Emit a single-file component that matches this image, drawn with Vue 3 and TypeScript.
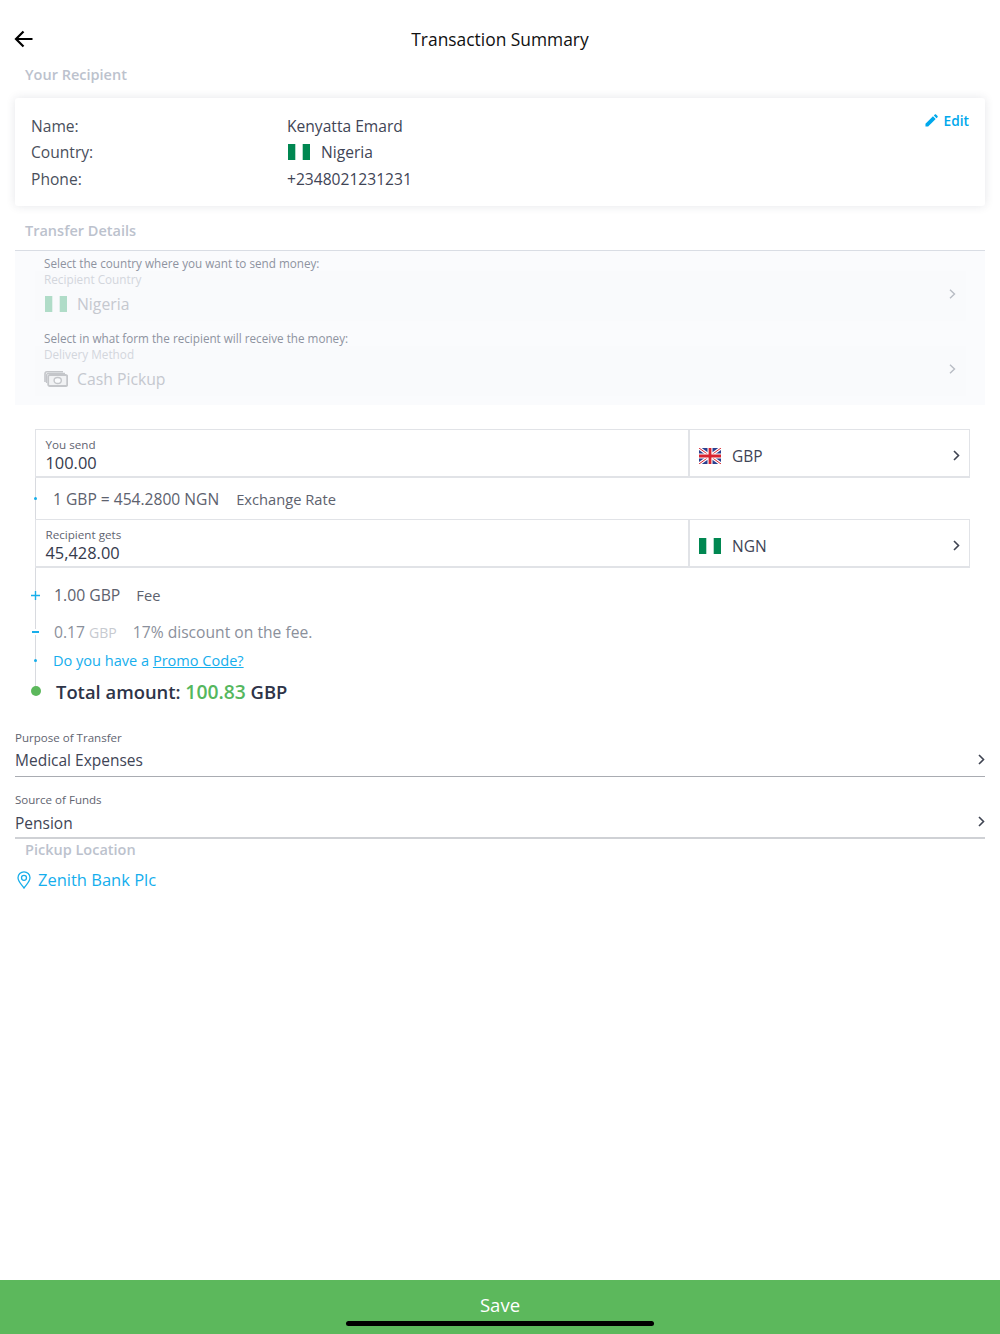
<script setup lang="ts">
const recipient = [
  { label: 'Name:', value: 'Kenyatta Emard', flag: false },
  { label: 'Country:', value: 'Nigeria', flag: true },
  { label: 'Phone:', value: '+2348021231231', flag: false },
]
const selects = [
  { label: 'Purpose of Transfer', value: 'Medical Expenses' },
  { label: 'Source of Funds', value: 'Pension' },
]
</script>

<template>
  <div class="page">
    <header class="header">
      <svg class="back" width="20" height="18" viewBox="0 0 20 18" fill="none" stroke="#000" stroke-width="2.2">
        <path d="M18.5 9H2M9.5 1.5 2 9l7.5 7.5" />
      </svg>
      <div class="title">Transaction Summary</div>
    </header>

    <div class="section-title recipient-title">Your Recipient</div>
    <section class="card">
      <div class="card-rows">
        <div v-for="r in recipient" :key="r.label" class="card-row">
          <span class="card-label">{{ r.label }}</span>
          <span class="card-value">
            <svg v-if="r.flag" class="flag flag-gap-small" width="22" height="16" viewBox="0 0 22 16"><rect width="7.3" height="16" fill="#008751" /><rect x="14.7" width="7.3" height="16" fill="#008751" /></svg>
            {{ r.value }}
          </span>
        </div>
      </div>
      <div class="edit">
        <svg width="13" height="13" viewBox="0 0 14 14" fill="#00a8ec"><path d="M0.5 13.5V10.6L8.6 2.5 11.5 5.4 3.4 13.5ZM9.5 1.6 10.6 0.5C11 .1 11.5 .1 11.9 .5L13.5 2.1C13.9 2.5 13.9 3 13.5 3.4L12.4 4.5Z" /></svg>
        <span>Edit</span>
      </div>
    </section>

    <div class="section-title details-title">Transfer Details</div>
    <section class="details">
      <div class="detail">
        <div class="detail-hint">Select the country where you want to send money:</div>
        <div class="detail-box">
          <div class="detail-label">Recipient Country</div>
          <div class="detail-value">
            <svg class="detail-icon" width="24" height="16" viewBox="0 0 24 16"><rect x="1" width="7.3" height="16" fill="#b0dcc8" /><rect x="15.7" width="7.3" height="16" fill="#b0dcc8" /></svg>
            Nigeria
          </div>
          <svg class="detail-chev" width="7" height="10" viewBox="0 0 7 10" fill="none" stroke="#b8bcc4" stroke-width="1.4"><path d="M1 .8 5.5 5 1 9.2" /></svg>
        </div>
      </div>
      <div class="detail">
        <div class="detail-hint">Select in what form the recipient will receive the money:</div>
        <div class="detail-box">
          <div class="detail-label">Delivery Method</div>
          <div class="detail-value">
            <svg class="detail-icon" width="24" height="16" viewBox="0 0 24 16" fill="none" stroke="#c4c6ca">
              <path d="M1 11V3C1 1.5 2 .8 3 .8H19" stroke-width="1.6" />
              <path d="M2.5 12V4.5C2.5 3 3.2 2.3 4.5 2.3H21" stroke-width="1.2" />
              <rect x="4.2" y="4" width="19" height="11" rx="1.5" stroke-width="1.8" fill="#f1f2f4" />
              <ellipse cx="13.7" cy="9.5" rx="3.6" ry="3" stroke-width="1.4" fill="#fafbfd" />
            </svg>
            Cash Pickup
          </div>
          <svg class="detail-chev" width="7" height="10" viewBox="0 0 7 10" fill="none" stroke="#b8bcc4" stroke-width="1.4"><path d="M1 .8 5.5 5 1 9.2" /></svg>
        </div>
      </div>
    </section>

    <section class="calc">
      <div class="amount-row">
        <div class="amount-main">
          <div class="amount-label">You send</div>
          <div class="amount-value">100.00</div>
        </div>
        <div class="amount-cur">
          <svg class="cur-flag" width="22" height="16" viewBox="0 0 22 16">
            <rect width="22" height="16" fill="#2b3f8f" />
            <path d="M0 0 22 16M22 0 0 16" stroke="#fff" stroke-width="3.2" />
            <path d="M0 0 22 16M22 0 0 16" stroke="#d8232f" stroke-width="1" />
            <path d="M11 0V16M0 8H22" stroke="#fff" stroke-width="5" />
            <path d="M11 0V16M0 8H22" stroke="#d8232f" stroke-width="2.8" />
          </svg>
          <span>GBP</span>
          <svg class="cur-chev" width="7" height="11" viewBox="0 0 7 11" fill="none" stroke="#3f4452" stroke-width="1.6"><path d="M1 1 5.5 5.5 1 10" /></svg>
        </div>
      </div>

      <div class="timeline">
        <div class="rate-row">
          <i class="dot" />
          <span class="rate">1 GBP = 454.2800 NGN</span>
          <span class="rate-note">Exchange Rate</span>
        </div>
      </div>

      <div class="amount-row amount-row-second">
        <div class="amount-main">
          <div class="amount-label">Recipient gets</div>
          <div class="amount-value">45,428.00</div>
        </div>
        <div class="amount-cur">
          <svg class="cur-flag" width="22" height="16" viewBox="0 0 22 16"><rect width="7.3" height="16" fill="#008751" /><rect x="14.7" width="7.3" height="16" fill="#008751" /></svg>
          <span>NGN</span>
          <svg class="cur-chev" width="7" height="11" viewBox="0 0 7 11" fill="none" stroke="#3f4452" stroke-width="1.6"><path d="M1 1 5.5 5.5 1 10" /></svg>
        </div>
      </div>

      <div class="timeline timeline-lower">
        <div class="tl-row fee-row">
          <svg class="mark-plus" width="9" height="9" viewBox="0 0 9 9" stroke="#18aeea" stroke-width="1.4"><path d="M4.5 0V9M0 4.5H9" /></svg>
          <span class="fee">1.00 GBP</span>
          <span class="fee-note">Fee</span>
        </div>
        <div class="tl-row discount-row">
          <i class="mark-minus" />
          <span class="disc">0.17 <span class="disc-cur">GBP</span></span>
          <span class="disc-note">17% discount on the fee.</span>
        </div>
        <div class="tl-row promo-row">
          <i class="dot" />
          <span class="promo">Do you have a <u>Promo Code?</u></span>
        </div>
        <div class="tl-row total-row">
          <i class="total-dot" />
          <span class="total">Total amount: <span class="total-num">100.83</span> GBP</span>
        </div>
      </div>
    </section>

    <section class="selects">
      <div v-for="s in selects" :key="s.label" class="select">
        <div class="select-label">{{ s.label }}</div>
        <div class="select-value">{{ s.value }}</div>
        <svg class="select-chev" width="7" height="11" viewBox="0 0 7 11" fill="none" stroke="#3f4452" stroke-width="1.6"><path d="M1 1 5.5 5.5 1 10" /></svg>
      </div>
    </section>

    <div class="section-title pickup-title">Pickup Location</div>
    <div class="pickup">
      <svg width="14" height="18" viewBox="0 0 14 18" fill="none" stroke="#18aeea" stroke-width="1.3"><path d="M7 17C4.5 13.5 1 10.5 1 6.8A6 6 0 0 1 13 6.8C13 10.5 9.5 13.5 7 17Z" /><circle cx="7" cy="6.8" r="2.5" /></svg>
      <span>Zenith Bank Plc</span>
    </div>

    <footer class="save">
      <span>Save</span>
      <i class="home-bar" />
    </footer>
  </div>
</template>

<style scoped>
.page {
  position: relative;
  width: 1000px;
  height: 1334px;
  background: #fff;
  overflow: hidden;
  display: flex;
  flex-direction: column;
  font-family: "Open Sans", sans-serif;
  color: #3b4154;
}
.header {
  height: 64px;
  padding: 17px 15px 0;
  box-sizing: border-box;
  position: relative;
  flex: none;
}
.back {
  position: absolute;
  left: 14px;
  top: 30px;
}
.title {
  text-align: center;
  font-size: 17.4px;
  line-height: 45px;
  color: #111;
}
.section-title {
  font-size: 14.5px;
  font-weight: 600;
  color: #bcc2cd;
  padding-left: 25px;
  line-height: 20px;
}
.recipient-title {
  line-height: 22px;
}
.card {
  margin: 12px 15px 0;
  height: 108px;
  box-sizing: border-box;
  border-radius: 3px;
  box-shadow: 0 0 10px rgba(40, 50, 70, 0.12);
  padding: 15px 16px;
  display: flex;
  justify-content: space-between;
}
.card-rows {
  display: flex;
  flex-direction: column;
  font-size: 15.6px;
}
.card-row {
  display: flex;
  height: 26.5px;
  align-items: center;
  padding-top: 1px;
}
.card-row:nth-child(2) {
  padding-top: 1.5px;
}
.card-row:last-child {
  padding-top: 3px;
}
.card-label {
  width: 256px;
  color: #4a4f5c;
}
.card-value {
  display: flex;
  align-items: center;
  color: #3f4556;
}
.flag-gap-small {
  margin-left: 1px;
  margin-right: 11px;
}
.edit {
  display: flex;
  align-items: center;
  gap: 6px;
  height: 14px;
  color: #00a8ec;
  font-size: 13.7px;
  font-weight: 600;
}
.details-title {
  margin-top: 15px;
  padding-bottom: 9px;
  height: 20px;
}
.details {
  margin: 0 15px;
  height: 155px;
  box-sizing: border-box;
  border-top: 1px solid #d9dde4;
  background: #fafbfd;
  padding: 4px 19px 0 20px;
  display: flex;
  flex-direction: column;
}
.detail {
  height: 75px;
  position: relative;
}
.detail-hint {
  font-size: 11.7px;
  line-height: 16px;
  color: #8e93a0;
  padding-left: 9px;
}
.detail-box {
  height: 50px;
  background: #f9fafc;
  position: relative;
  padding-left: 9px;
  color: #c8ccd3;
}
.detail-label {
  font-size: 11.75px;
  line-height: 15px;
  padding-top: 0.5px;
  color: #d3d6dc;
}
.detail-value {
  display: flex;
  align-items: center;
  font-size: 15.75px;
  line-height: 22px;
  margin-top: 6.5px;
  color: #c5c8cf;
}
.detail-icon {
  margin-right: 9px;
}
.detail-chev {
  position: absolute;
  right: 10px;
  top: 18px;
}
.calc {
  margin: 24px 30px 0 35px;
  display: flex;
  flex-direction: column;
}
.amount-row {
  display: flex;
  height: 49px;
  box-sizing: border-box;
  border: 1px solid #e1e3e7;
  border-width: 1px 1px 2px 1px;
}
.amount-main {
  width: 654px;
  padding: 8px 0 0 9.5px;
  box-sizing: border-box;
  border-right: 2px solid #e1e3e7;
}
.amount-label {
  font-size: 11.65px;
  line-height: 14px;
  color: #5f6470;
}
.amount-value {
  font-size: 16.4px;
  line-height: 22px;
  color: #353a4c;
}
.amount-cur {
  flex: 1;
  display: flex;
  align-items: center;
  padding: 5px 9px 0 9px;
  font-size: 15.5px;
  color: #3f4556;
}
.cur-flag {
  margin-right: 11px;
}
.cur-chev {
  margin-left: auto;
}
.timeline {
  border-left: 1.5px solid #d8dadf;
}
.rate-row {
  height: 41px;
  display: flex;
  align-items: center;
  padding-left: 17px;
  position: relative;
  font-size: 15.6px;
  color: #5d626e;
}
.rate-note {
  margin-left: 17px;
  font-size: 14.7px;
}
.dot {
  position: absolute;
  left: -2px;
  top: 19px;
  width: 3px;
  height: 3px;
  border-radius: 50%;
  background: #18aeea;
}
.timeline-lower {
  height: 123px;
  position: relative;
}
.tl-row {
  position: absolute;
  left: 0;
  display: flex;
  align-items: center;
}
.tl-row .dot {
  top: 50%;
  margin-top: -1.5px;
}
.fee-row {
  top: 16px;
  height: 22px;
  padding-left: 18px;
  font-size: 15.75px;
  color: #5d626e;
}
.fee-note {
  margin-left: 16px;
  font-size: 14.7px;
}
.mark-plus {
  position: absolute;
  left: -5px;
  top: 6.5px;
}
.mark-minus {
  position: absolute;
  height: 2px;
  width: 7px;
  background: #18aeea;
  box-shadow: 0 0 0 2px #fff;
  left: -4px;
  top: 10px;
}
.discount-row {
  top: 53px;
  height: 22px;
  padding-left: 18px;
  font-size: 15.7px;
  color: #8b909b;
}
.disc-cur {
  font-size: 14px;
  color: #c7cad0;
}
.disc-note {
  margin-left: 16px;
  font-size: 15.65px;
}
.promo-row {
  top: 81px;
  height: 22px;
  padding-left: 17px;
  font-size: 14.55px;
  color: #15aeed;
}
.total-row {
  top: 110px;
  height: 26px;
  padding-left: 20px;
  font-size: 18.4px;
  font-weight: 600;
  color: #2e3448;
}
.total-dot {
  position: absolute;
  left: -5px;
  top: 8px;
  width: 10px;
  height: 10px;
  border-radius: 50%;
  background: #5cb85c;
}
.total-num {
  color: #55b75e;
  font-size: 19.3px;
}
.selects {
  margin: 39px 15px 0;
  display: flex;
  flex-direction: column;
  gap: 15px;
}
.select {
  position: relative;
  height: 47px;
  box-sizing: border-box;
  border-bottom: 1px solid #a9acb2;
}
.select + .select {
  border-bottom: 2px solid #cfd1d5;
}
.select + .select .select-value {
  margin-top: 3px;
}
.select-label {
  font-size: 11.55px;
  line-height: 16px;
  color: #5f6470;
}
.select-value {
  font-size: 15.5px;
  line-height: 24px;
  margin-top: 2px;
  color: #3f4556;
}
.select-chev {
  position: absolute;
  right: 0;
  top: 24px;
}
.pickup-title {
  margin-top: 1px;
}
.pickup {
  margin: 8px 0 0 17px;
  display: flex;
  align-items: center;
  gap: 7px;
  font-size: 16.5px;
  line-height: 24px;
  color: #15aeed;
}
.save {
  position: absolute;
  left: 0;
  right: 0;
  bottom: 0;
  height: 54px;
  background: #5cb85c;
  color: #fff;
  text-align: center;
  font-size: 18.5px;
  line-height: 50px;
}
.home-bar {
  position: absolute;
  left: 346px;
  bottom: 8px;
  width: 308px;
  height: 5px;
  border-radius: 3px;
  background: #000;
}
</style>
